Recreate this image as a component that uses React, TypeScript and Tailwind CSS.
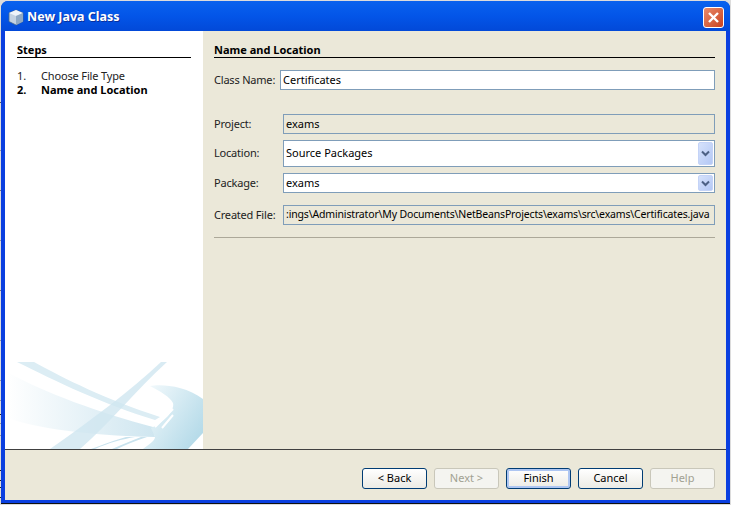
const font = "font-['Noto_Sans',_Tahoma,_sans-serif]";

// stray bits of the desktop showing past the window edge
const edgeTicks = [
  { y: 102, c: "#555" }, { y: 150, c: "#999" }, { y: 190, c: "#777" }, { y: 240, c: "#999" },
  { y: 290, c: "#777" }, { y: 340, c: "#999" }, { y: 380, c: "#999" }, { y: 400, c: "#999" },
  { y: 414, c: "#222" }, { y: 423, c: "#999" }, { y: 435, c: "#999" }, { y: 470, c: "#222" },
  { y: 480, c: "#222" }, { y: 487, c: "#222" }, { y: 497, c: "#222" },
];

const Label = ({ children, w = "w-[66px]" }: { children: React.ReactNode; w?: string }) => (
  <div className={`${w} shrink-0 text-[11px] tracking-[-0.2px] text-[#222]`}>{children}</div>
);

const Combo = ({ text, h, pl }: { text: string; h: string; pl: string }) => (
  <div className={`flex-1 min-w-0 ${h} ${pl} flex items-center justify-between bg-white border border-[#7f9db9] pr-px`}>
    <span className="text-[11px] text-black">{text}</span>
    <div className="w-[15px] h-[calc(100%-2px)] flex items-center justify-center bg-gradient-to-br from-[#d6e2fb] to-[#b4c8f5] border border-[#c4d3f7] rounded-[2px]">
      <svg width="9" height="7" viewBox="0 0 9 7">
        <path d="M1 1.5 L4.5 5 L8 1.5" fill="none" stroke="#4d6185" strokeWidth="2" />
      </svg>
    </div>
  </div>
);

const WizButton = ({ text, disabled, focused }: { text: string; disabled?: boolean; focused?: boolean }) => (
  <div
    className={`w-[65px] h-[21px] rounded-[3px] border flex items-center justify-center text-[11px] ${
      disabled
        ? "border-[#c9c7ba] bg-[#f4f4f0] text-[#a1a192]"
        : "border-[#003c74] bg-gradient-to-b from-white to-[#ecebe5] text-black"
    } ${focused ? "shadow-[inset_0_0_0_2px_#aec6f2]" : ""}`}
  >
    {text}
  </div>
);

export default function App() {
  return (
    <div className={`${font} relative w-[731px] h-[505px] overflow-hidden bg-[#dcdcdc] pl-px pt-px`}>
      {edgeTicks.map((t) => (
        <div key={t.y} className="absolute left-0 w-px h-px" style={{ top: t.y, backgroundColor: t.c }} />
      ))}
      <div className="w-[729px] h-[502px] flex flex-col rounded-t-[7px] overflow-hidden bg-[#0a3fe0] shadow-[0_1px_0_#111]">
        {/* title bar */}
        <div className="h-[30px] shrink-0 flex items-center justify-between pt-[3px] pl-[7px] pr-[6px] bg-gradient-to-b from-[#0a62ee] via-[#0355e8] to-[#0249d8]">
          <div className="flex items-center gap-[3px]">
            <svg width="16" height="17" viewBox="0 0 16 17">
              <path d="M8 1 L15 4 L15 12.5 L8 16 L1 12.5 L1 4 Z" fill="#c3d2e2" stroke="#4a6a8c" strokeWidth="0.8" />
              <path d="M8 1 L15 4 L8 7 L1 4 Z" fill="#eef4fa" />
              <path d="M8 7 L15 4 L15 12.5 L8 16 Z" fill="#8fa9c4" />
            </svg>
            <span className="text-[12.5px] font-bold text-white [text-shadow:1px_1px_0_#0a2f9c]">New Java Class</span>
          </div>
          <div className="w-[21px] h-[21px] -mt-[1px] rounded-[3px] border border-white bg-gradient-to-br from-[#e88a6a] to-[#c9401c] flex items-center justify-center">
            <svg width="13" height="13" viewBox="0 0 13 13">
              <path d="M2 2 L11 11 M11 2 L2 11" stroke="#fff" strokeWidth="2.4" />
            </svg>
          </div>
        </div>
        {/* body */}
        <div className="flex-1 mx-[4px] mb-[3px] flex flex-col bg-[#ebe8d9]">
          <div className="h-[419px] flex border-b border-[#404040]">
            <div className="w-[198px] shrink-0 bg-white flex flex-col">
              <div className="px-[12px] pt-[12px]">
                <div className="text-[11px] font-bold text-black border-b border-black h-[15px] leading-[13px]">Steps</div>
                <div className="mt-[11px] text-[11px] leading-[14px] text-[#222]">
                  <div className="flex"><span className="w-[24px]">1.</span><span className="tracking-[-0.15px]">Choose File Type</span></div>
                  <div className="flex font-bold text-black"><span className="w-[24px]">2.</span><span>Name and Location</span></div>
                </div>
              </div>
              <div className="mt-auto h-[88px]">
                <svg width="198" height="88" viewBox="0 0 198 88" className="block">
                  <defs>
                    <linearGradient id="band" x1="0" y1="0" x2="1" y2="0">
                      <stop offset="0" stopColor="#ffffff" />
                      <stop offset="1" stopColor="#cfe6f0" />
                    </linearGradient>
                    <linearGradient id="blob" x1="0" y1="0" x2="1" y2="0.7">
                      <stop offset="0" stopColor="#f6fbfd" />
                      <stop offset="1" stopColor="#b6dbe9" />
                    </linearGradient>
                  </defs>
                  <path d="M2 11 C40 32 95 52 148 66 L150 76 C100 75 40 70 2 57 Z" fill="url(#band)" />
                  <path d="M12 1 L29 1 C60 18 100 38 155 56 L150 59 C100 44 50 20 12 1 Z" fill="#dcedf4" />
                  <path d="M156 1 L162 1 C130 30 105 62 75 88 L45 88 C85 60 125 30 156 1 Z" fill="#cfe6f0" opacity="0.8" />
                  <path d="M145 25 C155 23 180 24 198 38 L198 72 L183 88 L138 88 C143 84 150 80 150 76 L146 67 C158 62 170 50 168 42 C165 36 155 30 145 25 Z" fill="url(#blob)" />
                  <path d="M150 66 L168 48 M157 67 L168 54" stroke="#ffffff" strokeWidth="2" />
                  <path d="M90 88 C103 82 118 78 130 76 L121 76 C110 79 100 83 86 88 Z M112 88 C120 84 130 80 142 76 L136 76 C126 80 116 84 107 88 Z" fill="#c9e3ee" />
                </svg>
              </div>
            </div>
            <div className="flex-1 min-w-0 pl-[11px] pr-[11px] pt-[12px] flex flex-col">
              <div className="text-[11px] font-bold text-black border-b border-black h-[15px] leading-[13px]">Name and Location</div>
              <div className="mt-[12px] flex items-center">
                <Label>Class Name:</Label>
                <div className="flex-1 min-w-0 h-[20px] bg-white border border-[#7f9db9] pl-[2px] flex items-center text-[11px] text-black">Certificates</div>
              </div>
              <div className="mt-[24px] flex items-center">
                <Label w="w-[69px]">Project:</Label>
                <div className="flex-1 min-w-0 h-[20px] bg-[#ebe8d9] border border-[#7f9db9] pl-[2px] flex items-center text-[11px] text-black">exams</div>
              </div>
              <div className="mt-[6px] flex items-center">
                <Label w="w-[69px]">Location:</Label>
                <Combo text="Source Packages" h="h-[27px]" pl="pl-[2px]" />
              </div>
              <div className="mt-[6px] flex items-center">
                <Label w="w-[69px]">Package:</Label>
                <Combo text="exams" h="h-[20px]" pl="pl-[2px]" />
              </div>
              <div className="mt-[12px] flex items-center">
                <Label w="w-[69px]">Created File:</Label>
                <div className="flex-1 min-w-0 h-[20px] bg-[#ebe8d9] border border-[#7f9db9] pl-[2px] flex items-center text-[10.5px] tracking-[-0.16px] text-black whitespace-nowrap">:ings\Administrator\My Documents\NetBeansProjects\exams\src\exams\Certificates.java</div>
              </div>
              <div className="mt-[12px] border-b border-[#aca899]" />
            </div>
          </div>
          <div className="flex-1 flex items-end justify-end gap-[7px] pr-[11px] pb-[11px]">
            <WizButton text="< Back" />
            <WizButton text="Next >" disabled />
            <WizButton text="Finish" focused />
            <WizButton text="Cancel" />
            <WizButton text="Help" disabled />
          </div>
        </div>
      </div>
    </div>
  );
}
